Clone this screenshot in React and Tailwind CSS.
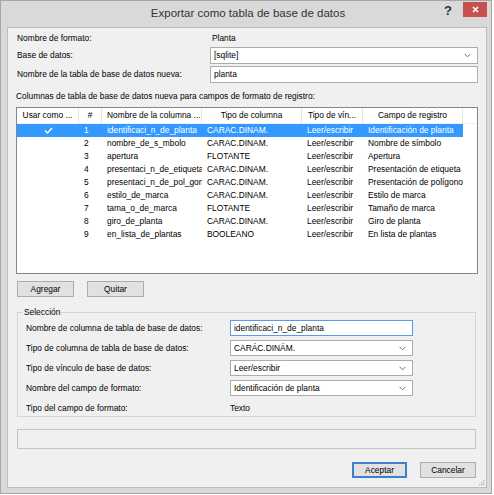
import React from 'react';

const rows = [
  ['1', 'identificaci_n_de_planta', 'CARÁC.DINÁM.', 'Identificación de planta'],
  ['2', 'nombre_de_s_mbolo', 'CARÁC.DINÁM.', 'Nombre de símbolo'],
  ['3', 'apertura', 'FLOTANTE', 'Apertura'],
  ['4', 'presentaci_n_de_etiqueta', 'CARÁC.DINÁM.', 'Presentación de etiqueta'],
  ['5', 'presentaci_n_de_pol_gono', 'CARÁC.DINÁM.', 'Presentación de polígono'],
  ['6', 'estilo_de_marca', 'CARÁC.DINÁM.', 'Estilo de marca'],
  ['7', 'tama_o_de_marca', 'FLOTANTE', 'Tamaño de marca'],
  ['8', 'giro_de_planta', 'CARÁC.DINÁM.', 'Giro de planta'],
  ['9', 'en_lista_de_plantas', 'BOOLEANO', 'En lista de plantas'],
];

const Chevron = () => (
  <svg width="7" height="5" viewBox="0 0 7 5" className="shrink-0">
    <path d="M0.5 0.8 L3.5 3.8 L6.5 0.8" fill="none" stroke="#707070" strokeWidth="1" />
  </svg>
);

const Select = ({ value, className = '' }) => (
  <div className={`flex items-center justify-between bg-white border border-[#acacac] pl-[3px] pr-[6px] ${className}`}>
    <span className="whitespace-nowrap">{value}</span>
    <Chevron />
  </div>
);

const Button = ({ children, primary, className = '' }) => (
  <button
    className={`h-[16px] flex items-center justify-center bg-[#e1e1e1] ${
      primary ? 'border-2 border-[#3c7fd0]' : 'border border-[#adadad]'
    } ${className}`}
  >
    {children}
  </button>
);

const Cell = ({ w, children, center }) => (
  <div className={`${w} shrink-0 overflow-hidden whitespace-nowrap ${center ? 'text-center' : 'pl-[5px]'}`}>
    {children}
  </div>
);

const HeadCell = ({ w, children, center }) => (
  <div
    className={`${w} shrink-0 h-full flex items-center overflow-hidden whitespace-nowrap border-r border-[#e5e5e5] ${
      center ? 'justify-center' : 'pl-[5px]'
    }`}
  >
    {children}
  </div>
);

export default function App() {
  return (
    <div className="w-[494px] h-[495px] bg-white">
      <div className="w-[492px] h-[494px] bg-[#d9d9d9] border border-[#a6a6a6] flex flex-col font-['Liberation_Sans',Arial,sans-serif] text-black text-[8.4px] leading-none">
        {/* Title bar */}
        <div className="h-[26px] relative flex items-center justify-center">
          <span className="text-[11.5px] text-[#333333] pl-[4px]">Exportar como tabla de base de datos</span>
          <span className="absolute left-[443px] top-[3px] text-[13px] font-bold text-[#333333]">?</span>
          <div className="absolute left-[462px] top-[1px] w-[24px] h-[15px] bg-[#c75050] flex items-center justify-center">
            <svg width="7" height="7" viewBox="0 0 7 7">
              <path d="M1 1 L6 6 M6 1 L1 6" stroke="#ffffff" strokeWidth="1.6" />
            </svg>
          </div>
        </div>

        {/* Content */}
        <div className="relative ml-[6px] w-[480px] h-[461px] bg-[#f0f0f0] border border-[#bdbdbd] px-[8px] flex flex-col">
          <div className="mt-[4px] h-[13px] flex items-center">
            <div className="w-[194px] pl-[1px]">Nombre de formato:</div>
            <div className="pl-[2px]">Planta</div>
          </div>
          <div className="mt-[2px] h-[17px] flex items-center">
            <div className="w-[194px] pl-[1px]">Base de datos:</div>
            <Select value="[sqlite]" className="flex-1 h-full" />
          </div>
          <div className="mt-[2px] h-[17px] flex items-center">
            <div className="w-[194px] pl-[1px]">Nombre de la tabla de base de datos nueva:</div>
            <div className="flex-1 h-full bg-white border border-[#abadb3] pl-[3px] flex items-center">planta</div>
          </div>
          <div className="mt-[7px] h-[12px] flex items-center">
            Columnas de tabla de base de datos nueva para campos de formato de registro:
          </div>

          {/* List view */}
          <div className="mt-[5px] h-[167px] bg-white border border-[#828790] flex flex-col">
            <div className="h-[16px] flex border-b border-[#f0f0f0]">
              <HeadCell w="w-[62px]" center>Usar como ...</HeadCell>
              <HeadCell w="w-[23px]" center>#</HeadCell>
              <HeadCell w="w-[100px]">Nombre de la columna ...</HeadCell>
              <HeadCell w="w-[100px]" center>Tipo de columna</HeadCell>
              <HeadCell w="w-[61px]" center>Tipo de vín...</HeadCell>
              <HeadCell w="w-[100px]" center>Campo de registro</HeadCell>
            </div>
            {rows.map((r, i) => (
              <div key={r[0]} className="h-[13px] flex items-center">
                <div className={`w-[446px] h-full flex items-center ${i === 0 ? 'bg-[#3399ff] text-white' : ''}`}>
                  <div className="w-[62px] shrink-0 flex justify-center">
                    {i === 0 && (
                      <svg width="9" height="7" viewBox="0 0 9 7">
                        <path d="M1 3.5 L3.5 6 L8 1" fill="none" stroke="#ffffff" strokeWidth="1.4" />
                      </svg>
                    )}
                  </div>
                  <Cell w="w-[23px]">{r[0]}</Cell>
                  <Cell w="w-[100px]">{r[1]}</Cell>
                  <Cell w="w-[100px]">{r[2]}</Cell>
                  <Cell w="w-[61px]">Leer/escribir</Cell>
                  <Cell w="w-[100px]">{r[3]}</Cell>
                </div>
              </div>
            ))}
          </div>

          <div className="mt-[7px] flex gap-[13px] pl-[1px]">
            <Button className="w-[57px]">Agregar</Button>
            <Button className="w-[57px]">Quitar</Button>
          </div>

          {/* Selection group */}
          <fieldset className="mt-[9px] ml-[1px] mr-[2px] border border-[#d5d5d5] pb-[2px]">
            <legend className="ml-[5px] px-[1px] h-[12px] leading-[12px]">Selección</legend>
            <div className="pt-[2px] flex flex-col gap-[4px]">
              <div className="h-[16px] flex items-center">
                <div className="w-[212px] pl-[8px]">Nombre de columna de tabla de base de datos:</div>
                <div className="w-[183px] h-full bg-white border border-[#569de5] pl-[3px] flex items-center">
                  identificaci_n_de_planta
                </div>
              </div>
              <div className="h-[16px] flex items-center">
                <div className="w-[212px] pl-[8px]">Tipo de columna de tabla de base de datos:</div>
                <Select value="CARÁC.DINÁM." className="w-[183px] h-full" />
              </div>
              <div className="h-[16px] flex items-center">
                <div className="w-[212px] pl-[8px]">Tipo de vínculo de base de datos:</div>
                <Select value="Leer/escribir" className="w-[183px] h-full" />
              </div>
              <div className="h-[16px] flex items-center">
                <div className="w-[212px] pl-[8px]">Nombre del campo de formato:</div>
                <Select value="Identificación de planta" className="w-[183px] h-full" />
              </div>
              <div className="mt-[2px] h-[12px] flex items-center">
                <div className="w-[212px] pl-[8px]">Tipo del campo de formato:</div>
                <div>Texto</div>
              </div>
            </div>
          </fieldset>

          {/* Status area */}
          <div className="mt-[12px] ml-[1px] mr-[2px] h-[20px] border border-[#c4c4c4]" />

          <div className="mt-[13px] mr-[2px] flex justify-end gap-[13px]">
            <Button primary className="w-[55px]">Aceptar</Button>
            <Button className="w-[56px]">Cancelar</Button>
          </div>

          {/* Resize grip */}
          <svg className="absolute right-[1px] bottom-[1px]" width="7" height="7" viewBox="0 0 7 7">
            <rect x="5" y="1" width="1.2" height="1.2" fill="#b0b0b0" />
            <rect x="3" y="3" width="1.2" height="1.2" fill="#b0b0b0" />
            <rect x="5" y="3" width="1.2" height="1.2" fill="#b0b0b0" />
            <rect x="1" y="5" width="1.2" height="1.2" fill="#b0b0b0" />
            <rect x="3" y="5" width="1.2" height="1.2" fill="#b0b0b0" />
            <rect x="5" y="5" width="1.2" height="1.2" fill="#b0b0b0" />
          </svg>
        </div>
      </div>
    </div>
  );
}
